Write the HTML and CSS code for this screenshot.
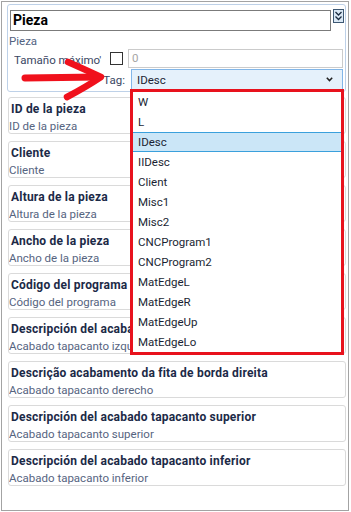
FILE: index.html
```html
<!DOCTYPE html>
<html lang="es">
<head>
    <meta charset="UTF-8">
    <title>Pieza</title>
    <link rel="stylesheet" href="styles.css">
</head>
<body>
    <div class="window">
        <!-- Header panel -->
        <div class="panel">
            <div class="title-row">
                <div class="title-box">Pieza</div>
                <div class="expand">
                    <svg width="11" height="14" viewBox="0 0 11 14">
                        <rect x="0.5" y="0.5" width="10" height="13" fill="#d9e7f4" stroke="#3d5873"/>
                        <polyline points="2.5,3 5.5,6 8.5,3" fill="none" stroke="#1b2c40" stroke-width="1.3"/>
                        <polyline points="2.5,7.5 5.5,10.5 8.5,7.5" fill="none" stroke="#1b2c40" stroke-width="1.3"/>
                    </svg>
                </div>
            </div>
            <div class="caption">Pieza</div>
            <div class="field-row">
                <span class="field-label">Tamaño máximo'</span>
                <span class="check"></span>
                <div class="num-box">0</div>
            </div>
            <div class="tag-row">
                <span class="tag-label">Tag:</span>
                <div class="combo">
                    <span>IDesc</span>
                    <svg width="7" height="5" viewBox="0 0 7 5">
                        <polyline points="0.8,0.8 3.5,3.6 6.2,0.8" fill="none" stroke="#222" stroke-width="1.5"/>
                    </svg>
                </div>
            </div>
        </div>

        <!-- Property cards -->
        <div class="cards">
            <div class="card"><div class="card-title">ID de la pieza</div><div class="card-sub">ID de la pieza</div></div>
            <div class="card"><div class="card-title">Cliente</div><div class="card-sub">Cliente</div></div>
            <div class="card"><div class="card-title">Altura de la pieza</div><div class="card-sub">Altura de la pieza</div></div>
            <div class="card"><div class="card-title">Ancho de la pieza</div><div class="card-sub">Ancho de la pieza</div></div>
            <div class="card"><div class="card-title">Código del programa</div><div class="card-sub">Código del programa</div></div>
            <div class="card"><div class="card-title">Descripción del acabado tapacanto izquierdo</div><div class="card-sub">Acabado tapacanto izquierdo</div></div>
            <div class="card"><div class="card-title">Descrição acabamento da fita de borda direita</div><div class="card-sub">Acabado tapacanto derecho</div></div>
            <div class="card"><div class="card-title">Descripción del acabado tapacanto superior</div><div class="card-sub">Acabado tapacanto superior</div></div>
            <div class="card"><div class="card-title">Descripción del acabado tapacanto inferior</div><div class="card-sub">Acabado tapacanto inferior</div></div>
        </div>

        <!-- Red annotation arrow -->
        <svg class="arrow" width="120" height="110" viewBox="0 0 120 110">
            <path d="M25 78 L98 77" fill="none" stroke="#f0111c" stroke-width="7" stroke-linecap="round"/>
            <path d="M68 62 Q86 70 101 77 Q86 87 67 97" fill="none" stroke="#f0111c" stroke-width="6.5" stroke-linecap="round" stroke-linejoin="round"/>
        </svg>

        <!-- Open combo dropdown -->
        <ul class="dropdown">
            <li>W</li>
            <li>L</li>
            <li class="selected">IDesc</li>
            <li>IIDesc</li>
            <li>Client</li>
            <li>Misc1</li>
            <li>Misc2</li>
            <li>CNCProgram1</li>
            <li>CNCProgram2</li>
            <li>MatEdgeL</li>
            <li>MatEdgeR</li>
            <li>MatEdgeUp</li>
            <li>MatEdgeLo</li>
        </ul>
    </div>
</body>
</html>
```

FILE: styles.css
```css
/* General */
body {
    margin: 0;
    background: #fff;
    font-family: Roboto, "Noto Sans", sans-serif;
    font-size: 11.5px;
    color: #1c2a47;
}

.window {
    position: relative;
    box-sizing: border-box;
    width: 348px;
    height: 510px;
    margin: 1px 0 0 1px;
    padding: 2px 0 0 5px;
    border: 1px solid #a3a3a3;
    background: #fff;
}

/* Header panel */
.panel {
    box-sizing: border-box;
    width: 339px;
    padding: 4px 0 1px 2px;
    border: 1px solid #bed1e8;
    border-radius: 3px;
    background: #fff;
}

.title-row {
    display: flex;
    align-items: flex-start;
}

.title-box {
    box-sizing: border-box;
    width: 321px;
    height: 21px;
    margin-top: 1px;
    padding-left: 2px;
    border: 1px solid #7b7b7b;
    font-size: 14px;
    font-weight: bold;
    line-height: 19px;
    color: #000;
}

.expand {
    margin-left: 2px;
    height: 14px;
}

.expand svg {
    display: block;
}

.caption {
    margin: 2px 0 0 -1px;
    line-height: 16px;
    color: #52627f;
}

.field-row {
    display: flex;
    align-items: center;
    height: 19px;
}

.field-label {
    width: 95px;
    margin-left: 4px;
    overflow: hidden;
    white-space: nowrap;
    color: #3a4763;
    padding-top: 3px;
}

.check {
    box-sizing: border-box;
    width: 13px;
    height: 13px;
    margin-left: 1px;
    border: 1px solid #333;
    background: #fff;
}

.num-box {
    box-sizing: border-box;
    width: 215px;
    height: 19px;
    margin-left: 5px;
    padding-left: 3px;
    border: 1px solid #cbcbcb;
    line-height: 17px;
    color: #a5a5a5;
}

.tag-row {
    display: flex;
    align-items: center;
    margin-top: 1px;
}

.tag-label {
    width: 115px;
    text-align: right;
    color: #3a4763;
}

.combo {
    box-sizing: border-box;
    display: flex;
    align-items: center;
    justify-content: space-between;
    width: 212px;
    height: 21px;
    margin-left: 6px;
    padding: 0 9px 0 5px;
    border: 1px solid #82b6e8;
    background: #e5f1fb;
    color: #1a1f33;
}

.combo svg {
    display: block;
}

/* Cards */
.cards {
    display: flex;
    flex-direction: column;
    gap: 7px;
    margin: 5px 0 0 1px;
}

.card {
    box-sizing: border-box;
    width: 338px;
    height: 37px;
    padding-top: 3px;
    border: 1px solid #dadada;
    border-radius: 3px;
    overflow: hidden;
}

.card-title {
    padding-left: 2px;
    font-size: 12px;
    font-weight: bold;
    letter-spacing: 0.2px;
    line-height: 17px;
    color: #1c2a47;
    white-space: nowrap;
}

.card-sub {
    margin-top: 1px;
    line-height: 15px;
    color: #56647f;
    white-space: nowrap;
}

/* Overlays */
.arrow {
    position: absolute;
    left: -2px;
    top: -2px;
}

.dropdown {
    position: absolute;
    left: 128px;
    top: 87px;
    box-sizing: border-box;
    width: 214px;
    height: 266px;
    margin: 0;
    padding: 0;
    list-style: none;
    border: 3px solid #e8121d;
    background: #fff;
}

.dropdown li {
    box-sizing: border-box;
    height: 20px;
    padding-left: 5px;
    line-height: 20px;
    color: #1a1f33;
}

.dropdown li.selected {
    border-top: 1px solid #3aa0dc;
    border-bottom: 1px solid #3aa0dc;
    background: #cbe6f7;
    line-height: 18px;
}
```
